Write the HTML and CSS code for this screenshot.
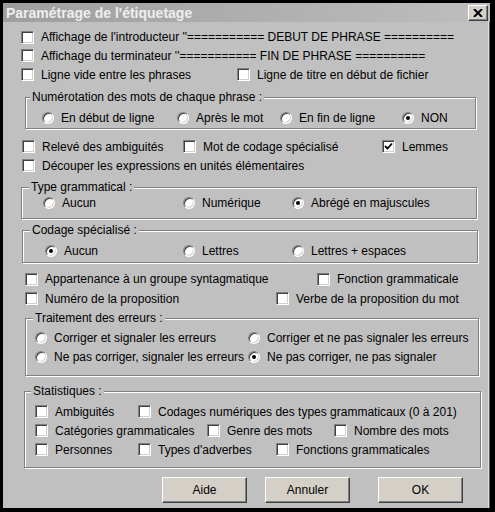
FILE: index.html
```html
<!DOCTYPE html>
<html lang="fr">
<head>
    <meta charset="UTF-8">
    <meta name="viewport" content="width=device-width, initial-scale=1.0">
    <title>Paramétrage de l'étiquetage</title>
    <link rel="stylesheet" href="styles.css">
</head>
<body>
    <div class="window">
        <div class="titlebar">
            <span class="title">Paramétrage de l'étiquetage</span>
            <button class="close" type="button">
                <svg width="10" height="8" viewBox="0 0 10 8"><path d="M1 0 L9 8 M9 0 L1 8" stroke="#000" stroke-width="2"/></svg>
            </button>
        </div>

        <div class="content">
            <div class="row r-first">
                <label class="check"><span class="box"></span>Affichage de l'introducteur ''=========== DEBUT DE PHRASE ==========</label>
            </div>
            <div class="row">
                <label class="check"><span class="box"></span>Affichage du terminateur ''=========== FIN DE PHRASE ==========</label>
            </div>
            <div class="row cols-ligne">
                <label class="check"><span class="box"></span>Ligne vide entre les phrases</label>
                <label class="check"><span class="box"></span>Ligne de titre en début de fichier</label>
            </div>

            <div class="group g-num">
                <div class="legend legend-num">Numérotation des mots de chaque phrase :</div>
                <div class="row cols-num">
                    <label class="radio"><span class="dot"></span>En début de ligne</label>
                    <label class="radio"><span class="dot"></span>Après le mot</label>
                    <label class="radio"><span class="dot"></span>En fin de ligne</label>
                    <label class="radio"><span class="dot on"></span>NON</label>
                </div>
            </div>

            <div class="row cols-releve r-after-num">
                <label class="check"><span class="box"></span>Relevé des ambiguités</label>
                <label class="check"><span class="box"></span>Mot de codage spécialisé</label>
                <label class="check"><span class="box on"><svg width="9" height="9" viewBox="0 0 9 9"><path d="M1 4 L3.5 6.5 L8 1.5" fill="none" stroke="#000" stroke-width="1.8"/></svg></span>Lemmes</label>
            </div>
            <div class="row pl-19">
                <label class="check"><span class="box"></span>Découper les expressions en unités élémentaires</label>
            </div>

            <div class="group g-type">
                <div class="legend">Type grammatical :</div>
                <div class="row cols-type">
                    <label class="radio"><span class="dot"></span>Aucun</label>
                    <label class="radio"><span class="dot"></span>Numérique</label>
                    <label class="radio"><span class="dot on"></span>Abrégé en majuscules</label>
                </div>
            </div>

            <div class="group g-codage">
                <div class="legend">Codage spécialisé :</div>
                <div class="row cols-codage">
                    <label class="radio"><span class="dot on"></span>Aucun</label>
                    <label class="radio"><span class="dot"></span>Lettres</label>
                    <label class="radio"><span class="dot"></span>Lettres + espaces</label>
                </div>
            </div>

            <div class="row cols-appart r-after-codage">
                <label class="check"><span class="box"></span>Appartenance à un groupe syntagmatique</label>
                <label class="check"><span class="box"></span>Fonction grammaticale</label>
            </div>
            <div class="row cols-numero">
                <label class="check"><span class="box"></span>Numéro de la proposition</label>
                <label class="check"><span class="box"></span>Verbe de la proposition du mot</label>
            </div>

            <div class="group g-err">
                <div class="legend">Traitement des erreurs :</div>
                <div class="row cols-err r-err-1">
                    <label class="radio"><span class="dot"></span>Corriger et signaler les erreurs</label>
                    <label class="radio"><span class="dot"></span>Corriger et ne pas signaler les erreurs</label>
                </div>
                <div class="row cols-err r-err-2">
                    <label class="radio"><span class="dot"></span>Ne pas corriger, signaler les erreurs</label>
                    <label class="radio"><span class="dot on"></span>Ne pas corriger, ne pas signaler</label>
                </div>
            </div>

            <div class="group g-stats">
                <div class="legend legend-stats">Statistiques :</div>
                <div class="row cols-stats-1 r-stats-1">
                    <label class="check"><span class="box"></span>Ambiguités</label>
                    <label class="check"><span class="box"></span>Codages numériques des types grammaticaux (0 à 201)</label>
                </div>
                <div class="row cols-stats-2">
                    <label class="check"><span class="box"></span>Catégories grammaticales</label>
                    <label class="check"><span class="box"></span>Genre des mots</label>
                    <label class="check"><span class="box"></span>Nombre des mots</label>
                </div>
                <div class="row cols-stats-3">
                    <label class="check"><span class="box"></span>Personnes</label>
                    <label class="check"><span class="box"></span>Types d'adverbes</label>
                    <label class="check"><span class="box"></span>Fonctions grammaticales</label>
                </div>
            </div>

            <div class="buttons">
                <button class="btn" type="button">Aide</button>
                <button class="btn btn-annuler" type="button">Annuler</button>
                <button class="btn btn-ok" type="button">OK</button>
            </div>
        </div>
    </div>
</body>
</html>
```

FILE: styles.css
```css
body {
    margin: 0;
    background: #000;
    font-family: "Liberation Sans", Arial, sans-serif;
    font-size: 12px;
    color: #000;
}
.window {
    width: 487px;
    height: 505px;
    margin: 3px 0 0 3px;
    background: #c0c0c0;
    box-shadow: inset -1px 0 #5a5a5a, inset -2px 0 #e0e0e0;
    overflow: hidden;
}
.titlebar {
    height: 19px;
    display: flex;
    align-items: center;
    justify-content: space-between;
    padding: 0 2px 0 3px;
    background: linear-gradient(to right, #9e9e9e, #bebebe);
}
.title {
    font-weight: bold;
    font-size: 14px;
    color: #eeeeee;
}
.close {
    width: 20px;
    height: 16px;
    padding: 0;
    display: flex;
    align-items: center;
    justify-content: center;
    background: #d4d0c8;
    border: 1px solid;
    border-color: #fff #404040 #404040 #fff;
    box-shadow: inset -1px -1px #808080;
}
.content {
    padding-top: 6px;
}

/* rows */
.row {
    display: grid;
    align-items: center;
    height: 19px;
    padding-left: 18px;
    white-space: nowrap;
}
.r-first { height: 18px; }
.pl-19 { padding-left: 19px; }
.cols-ligne { grid-template-columns: 216px auto; }
.cols-releve { padding-left: 19px; grid-template-columns: 161px 199px auto; }
.r-after-num { margin-top: 8px; }
.cols-appart { padding-left: 22px; grid-template-columns: 292px auto; height: 20px; }
.r-after-codage { margin-top: 6px; }
.cols-numero { padding-left: 22px; grid-template-columns: 251px auto; }

.check, .radio {
    display: flex;
    align-items: center;
}
.box {
    width: 13px;
    height: 13px;
    box-sizing: border-box;
    margin-right: 7px;
    flex-shrink: 0;
    display: flex;
    align-items: center;
    justify-content: center;
    background: #fff;
    border: 1px solid;
    border-color: #808080 #fff #fff #808080;
    box-shadow: inset 1px 1px #404040, inset -1px -1px #d4d0c8;
}
.dot {
    position: relative;
    width: 12px;
    height: 12px;
    box-sizing: border-box;
    margin-right: 7px;
    flex-shrink: 0;
    border-radius: 50%;
    background: #fff;
    border: 1px solid;
    border-color: #808080 #fff #fff #808080;
    box-shadow: inset 1px 1px #404040, inset -1px -1px #d4d0c8;
}
.dot.on::after {
    content: "";
    position: absolute;
    left: 3px;
    top: 3px;
    width: 4px;
    height: 4px;
    border-radius: 50%;
    background: #000;
}

/* group boxes */
.group {
    box-sizing: border-box;
    border: 1px solid #808080;
    box-shadow: inset 1px 1px #fff, 1px 1px #fff;
}
.legend {
    display: table;
    margin: -8px 0 0 7px;
    padding: 0 2px;
    line-height: 14px;
    background: #c0c0c0;
}
.legend-num { margin-left: 4px; }
.legend-stats { margin-left: 6px; }

.g-num { margin: 13px 0 0 22px; width: 451px; padding-bottom: 1px; }
.cols-num { margin-top: 5px; height: 18px; padding-left: 16px; grid-template-columns: 135px 103px 122px auto; }

.g-type { margin: 12px 0 0 18px; width: 456px; padding-bottom: 6px; }
.cols-type { height: 18px; padding-left: 21px; grid-template-columns: 140px 109px auto; }

.g-codage { margin: 11px 0 0 19px; width: 456px; padding-bottom: 2px; }
.cols-codage { margin-top: 5px; height: 18px; padding-left: 22px; grid-template-columns: 138px 109px auto; }

.g-err { margin: 10px 0 0 22px; width: 454px; padding-bottom: 9px; }
.cols-err { height: 18px; padding-left: 9px; grid-template-columns: 213px auto; }
.r-err-1 { margin-top: 4px; }
.r-err-2 { margin-top: 1px; }

.g-stats { margin: 15px 0 0 21px; width: 457px; padding-bottom: 8px; }
.g-stats .row { padding-left: 10px; }
.r-stats-1 { margin-top: 4px; }
.cols-stats-1 { grid-template-columns: 103px auto; }
.cols-stats-2 { grid-template-columns: 172px 127px auto; }
.cols-stats-3 { grid-template-columns: 103px 138px auto; }

/* buttons */
.buttons {
    display: flex;
    margin-top: 9px;
    padding-left: 159px;
}
.btn {
    width: 85px;
    height: 26px;
    padding: 0;
    font: inherit;
    color: #000;
    background: #d4d0c8;
    border: 1px solid;
    border-color: #fff #404040 #404040 #fff;
    box-shadow: inset -1px -1px #808080;
}
.btn-annuler { margin-left: 18px; }
.btn-ok { margin-left: 28px; }
```
